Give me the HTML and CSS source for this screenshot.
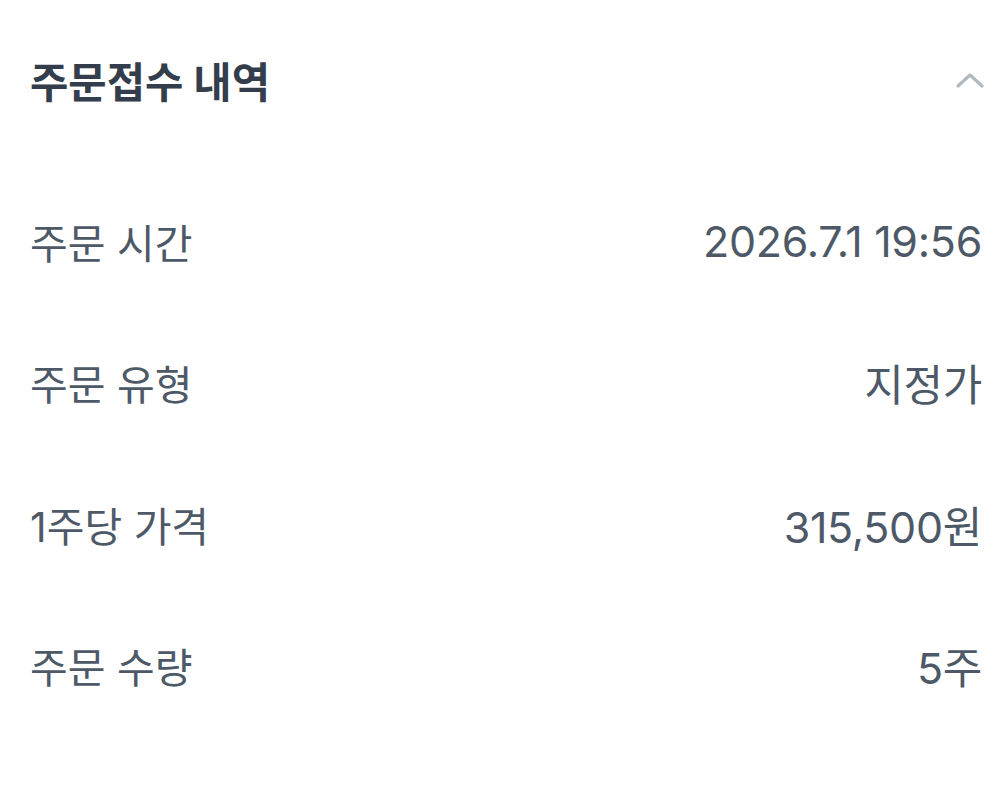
FILE: index.html
```html
<!DOCTYPE html>
<html lang="ko">
<head>
<meta charset="UTF-8">
<title>주문접수 내역</title>
<meta name="viewport" content="width=device-width, initial-scale=1.0">
<link rel="stylesheet" href="styles.css">
</head>
<body>
  <section class="order">
    <header class="order-head">
      <h2>주문접수 내역</h2>
      <svg class="chevron" width="30" height="18" viewBox="0 0 30 18">
        <path d="M3 15 L15 4 L27 15" fill="none" stroke="#b0b8c1" stroke-width="3.2" stroke-linecap="round" stroke-linejoin="round"/>
      </svg>
    </header>
    <div class="row"><span class="label">주문 시간</span><span class="value">2026.7.1 19:56</span></div>
    <div class="row"><span class="label">주문 유형</span><span class="value">지정가</span></div>
    <div class="row"><span class="label">1주당 가격</span><span class="value">315,500원</span></div>
    <div class="row"><span class="label">주문 수량</span><span class="value">5주</span></div>
  </section>
</body>
</html>
```

FILE: styles.css
```css
body {
  margin: 0;
  background: #fff;
  font-family: Inter, "Noto Sans CJK KR", sans-serif;
}
.order {
  padding: 0 16px 0 30px;
}
.order-head {
  height: 160px;
  padding-bottom: 10px;
  display: flex;
  justify-content: space-between;
  align-items: center;
}
.order-head h2 {
  margin: 0;
  font-size: 41.7px;
  font-weight: 700;
  color: #333d4b;
}
.chevron {
  margin-right: -3px;
}
.row {
  height: 141.5px;
  display: flex;
  justify-content: space-between;
  align-items: center;
  font-size: 41px;
  color: #4e5968;
}
.value {
  font-size: 43px;
  letter-spacing: -0.3px;
}
```
